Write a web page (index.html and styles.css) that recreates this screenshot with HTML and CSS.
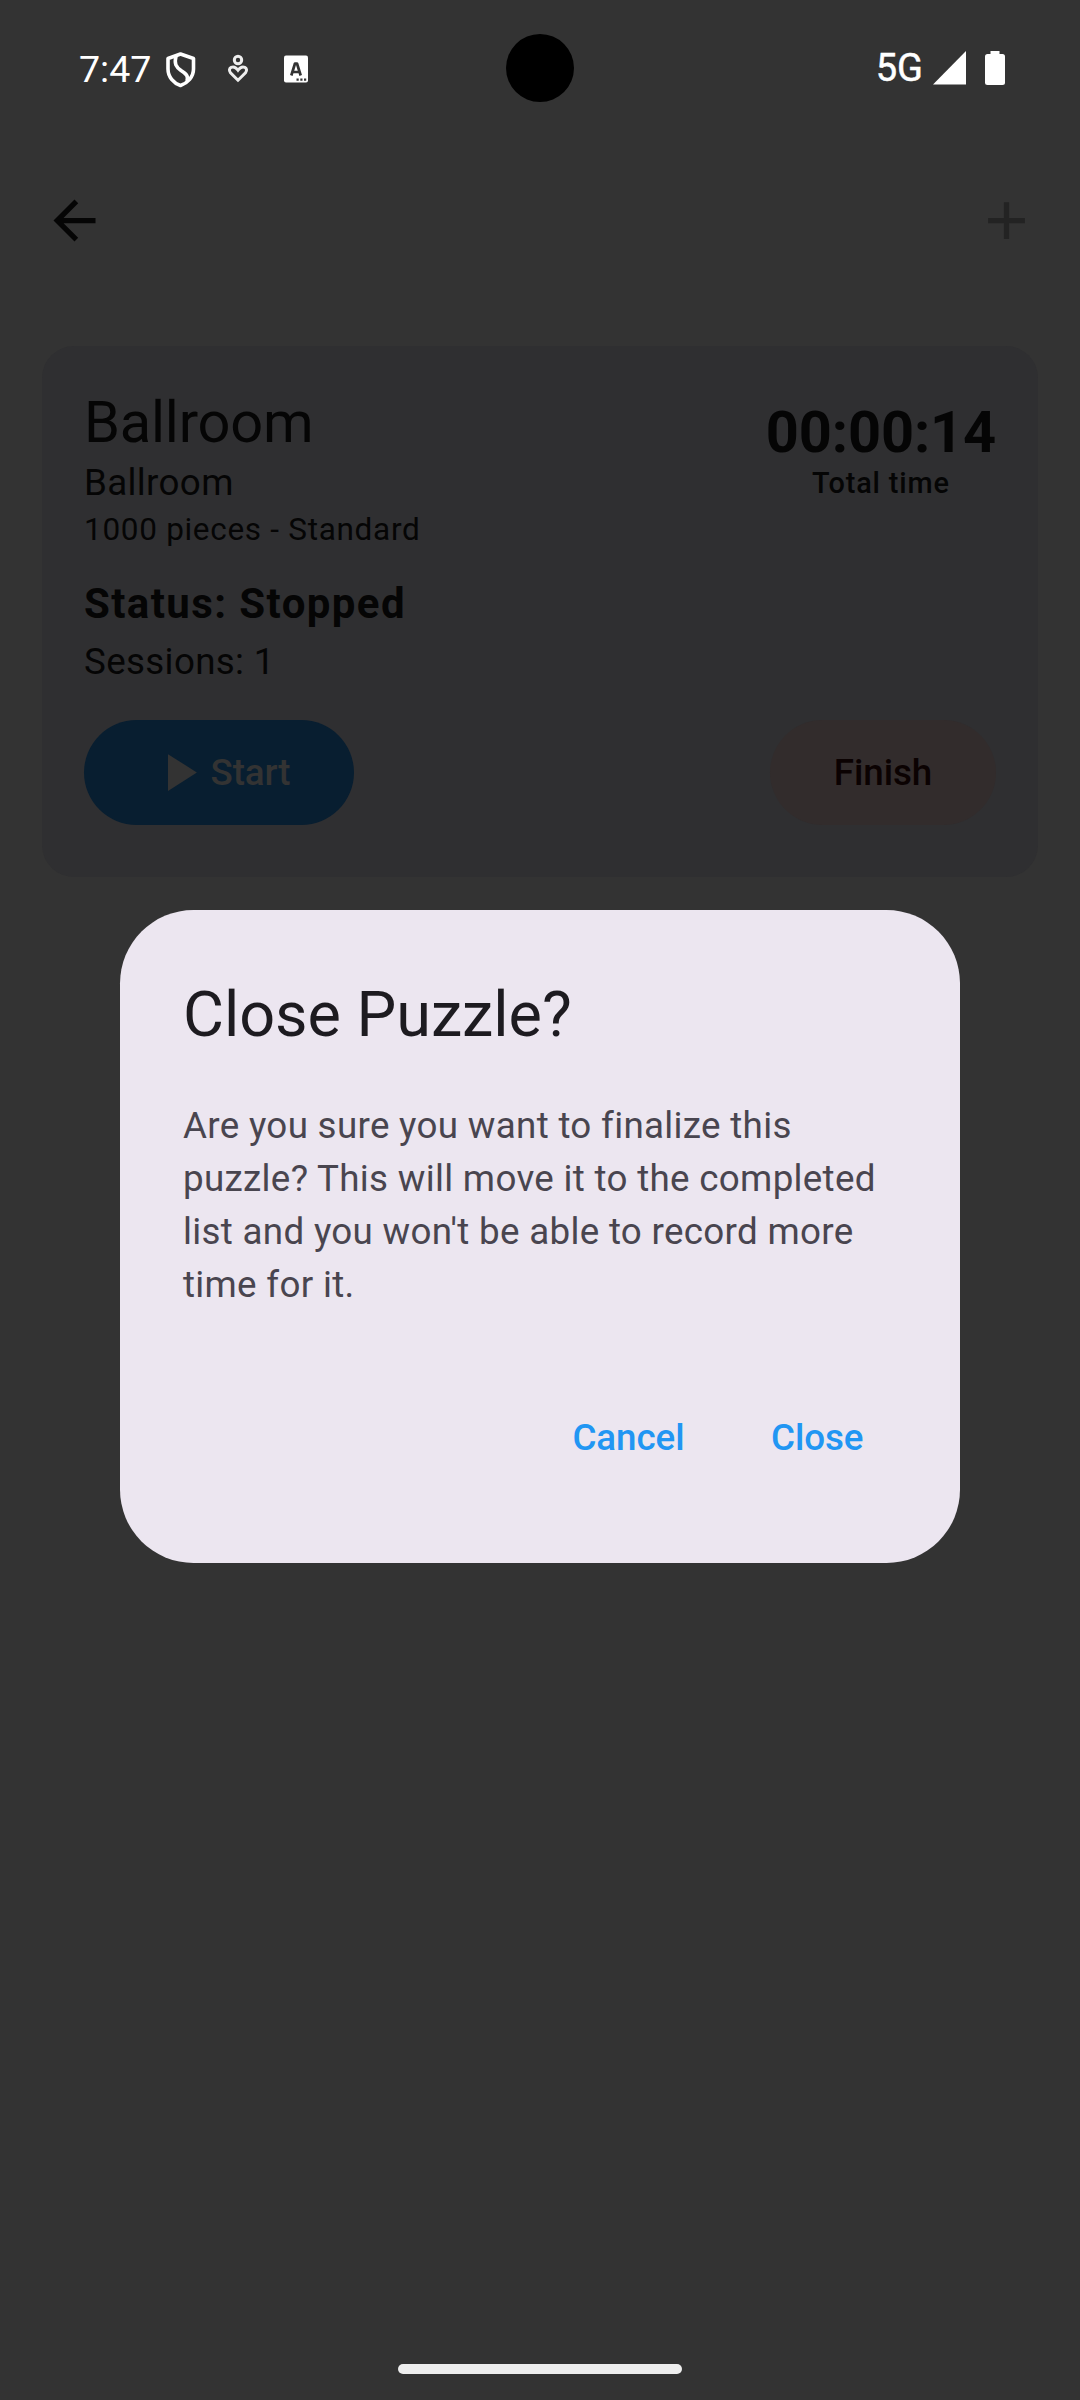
FILE: index.html
```html
<!DOCTYPE html>
<html lang="en">
<head>
<meta charset="utf-8">
<title>Puzzle details</title>
<link rel="stylesheet" href="styles.css">
</head>
<body>
<div class="screen">
  <header class="status-bar">
    <div class="status-left">
      <span class="clock">7:47</span>
      <svg class="shield" width="30" height="36" viewBox="0 0 30 36" fill="none" stroke="#fff" stroke-width="3.600" stroke-linejoin="round"><path d="M14.500 2 27.500 6.500V17C27.500 25 21.500 31 14.500 33.500 7.500 31 2 25 2 17V6.500Z"/><path d="M10 4C8 12 10 15 15 18.500 20.500 22 22.500 24 21 29"/></svg>
      <svg class="care" width="22" height="30" viewBox="0 0 22 30" fill="none" stroke="#eee" stroke-width="3"><circle cx="11" cy="6" r="3.700"/><path d="M11 26.200 3.500 18.700C-.2 14 6.500 10.200 11 16.200 15.500 10.200 22.200 14 18.500 18.700Z"/></svg>
      <svg class="letter" width="24" height="28" viewBox="0 0 24 28"><rect y=".5" width="24" height="27" rx="2" fill="#fff"/><path d="M7.300 20.500 11 8.500H13L16.700 20.500M9 17H15" fill="none" stroke="#333" stroke-width="2.700" stroke-linejoin="round"/><path d="M12.500 23.500h2.200v2.200h-2.200zm3.800 0h2.200v2.200h-2.200zm3.700 0h2.200v2.200H20z" fill="#333"/></svg>
    </div>
    <div class="camera"></div>
    <div class="status-right">
      <span class="network">5G</span>
      <svg class="signal" width="33" height="34" viewBox="0 0 33 34"><path d="M33 0V33.500H0Z" fill="#fff"/></svg>
      <svg class="battery" width="20" height="34" viewBox="0 0 20 34" fill="#fff"><rect y="3" width="20" height="31" rx="2.500"/><rect x="5.500" width="9" height="5"/></svg>
    </div>
  </header>
  <nav class="app-bar">
    <svg width="63" height="63" viewBox="0 0 24 24" fill="#050505"><path d="M20 11H7.830l5.590-5.590L12 4l-8 8 8 8 1.410-1.410L7.830 13H20v-2z"/></svg>
    <svg width="63" height="63" viewBox="0 0 24 24" fill="#232323"><path d="M19 13h-6v6h-2v-6H5v-2h6V5h2v6h6v2z"/></svg>
  </nav>
  <main class="card">
    <div class="summary">
      <div>
        <h1 class="name">Ballroom</h1>
        <p class="body-text">Ballroom</p>
        <p class="pieces">1000 pieces - Standard</p>
      </div>
      <div class="total">
        <div class="time">00:00:14</div>
        <div class="time-label">Total time</div>
      </div>
    </div>
    <p class="status">Status: Stopped</p>
    <p class="body-text">Sessions: 1</p>
    <div class="actions">
      <button class="button start"><svg width="63" height="63" viewBox="0 0 24 24" fill="#333"><path d="M8 5v14l11-7z"/></svg>Start</button>
      <button class="button finish">Finish</button>
    </div>
  </main>
  <section class="dialog" role="dialog">
    <h2 class="dialog-title">Close Puzzle?</h2>
    <p class="dialog-text">Are you sure you want to finalize this<br>puzzle? This will move it to the completed<br>list and you won't be able to record more<br>time for it.</p>
    <div class="dialog-actions">
      <button class="text-button">Cancel</button>
      <button class="text-button">Close</button>
    </div>
  </section>
  <div class="home-handle"></div>
</div>
</body>
</html>
```
FILE: styles.css
```css
* { box-sizing: border-box; }
body { margin: 0; background: #333; font-family: Roboto, sans-serif; }
h1, h2, p { margin: 0; font-weight: 400; }
svg { display: block; flex: none; }
button { border: 0; font: 500 36.75px/52px Roboto, sans-serif; letter-spacing: -.07px; white-space: nowrap; }

.screen { position: relative; width: 1080px; height: 2400px; overflow: hidden; background: #333; color: #050505; }

.status-bar { display: grid; grid-template-columns: 1fr 68px 1fr; align-items: center; height: 136px; color: #fff; }
.status-left, .status-right { display: flex; align-items: center; }
.status-left { padding-left: 79px; }
.status-right { justify-content: flex-end; padding-right: 75px; }
.clock { width: 71px; margin-top: 1px; font-size: 37.5px; line-height: 44px; white-space: nowrap; }
.shield { margin: 3px 0 0 16px; }
.care { margin: 2px 0 0 31px; }
.letter { margin: 2px 0 0 35px; }
.camera { width: 68px; height: 68px; border-radius: 50%; background: #000; }
.network { font-size: 38px; line-height: 44px; -webkit-text-stroke: .5px #fff; }
.signal { margin-left: 10px; }
.battery { margin-left: 19px; }

.app-bar { display: flex; justify-content: space-between; align-items: center; height: 168px; padding: 0 42px 0 43px; }

.card { margin: 42px 42px 0; height: 531px; padding: 41px 42px 52px; border-radius: 32px; background: #2f2f31; }
.summary { display: flex; justify-content: space-between; }
.name { font-size: 57.75px; line-height: 70px; letter-spacing: -.2px; }
.body-text { font-size: 36.75px; line-height: 52px; letter-spacing: .34px; }
.pieces { font-size: 31.5px; line-height: 42px; letter-spacing: .7px; }
.total { padding-top: 12px; text-align: center; }
.time { font-size: 57.75px; font-weight: 700; line-height: 66px; letter-spacing: -.15px; }
.time-label { font-size: 28.875px; font-weight: 500; line-height: 36px; letter-spacing: .85px; }
.status { margin-top: 21px; font-size: 42px; font-weight: 700; line-height: 63px; letter-spacing: 1.4px; }
.status + .body-text { padding-top: 1px; }
.actions { display: flex; justify-content: space-between; margin-top: 32px; }
.button { display: flex; align-items: center; justify-content: center; height: 105px; border-radius: 53px; }
.start { width: 270px; padding: 0; background: #081e30; color: #333; }
.finish { width: 226px; padding: 0; background: #322c2c; color: #0b0202; }

.dialog { position: absolute; left: 120px; top: 910px; width: 840px; height: 653px; padding: 63px; border-radius: 73.5px; background: #ece6f0; }
.dialog-title { color: #1d1b20; font-size: 63px; line-height: 84px; letter-spacing: -.05px; }
.dialog-text { margin-top: 42px; color: #49454f; font-size: 36.75px; line-height: 53px; letter-spacing: .31px; white-space: nowrap; }
.dialog-actions { display: flex; justify-content: flex-end; gap: 23.5px; margin-top: 64px; padding-right: 2px; }
.text-button { height: 126px; padding: 0 31.5px; background: none; color: #2196f3; }

.home-handle { position: absolute; left: 398px; bottom: 26px; width: 284px; height: 10px; border-radius: 5px; background: #eee; }
```
